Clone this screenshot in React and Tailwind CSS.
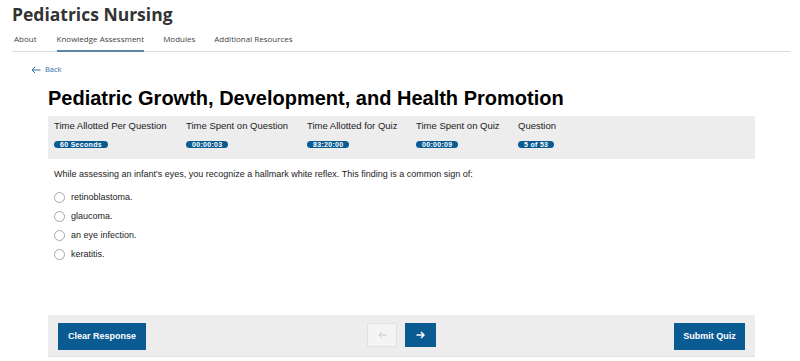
import React, { useState } from 'react';

const stats = [
    { label: 'Time Allotted Per Question', value: '60 Seconds', w: 'w-[132px]' },
    { label: 'Time Spent on Question', value: '00:00:03', w: 'w-[121px]' },
    { label: 'Time Allotted for Quiz', value: '83:20:00', w: 'w-[109px]' },
    { label: 'Time Spent on Quiz', value: '00:00:09', w: 'w-[102px]' },
    { label: 'Question', value: '5 of 53', w: 'w-[100px]' },
];

const options = ['retinoblastoma.', 'glaucoma.', 'an eye infection.', 'keratitis.'];

const tabs = ['About', 'Knowledge Assessment', 'Modules', 'Additional Resources'];

const App = () => {
    const [selected, setSelected] = useState(null);

    return (
        <div className="w-[800px] h-[361px] bg-white overflow-hidden text-[#222]">
            {/* Course header */}
            <div className="px-[12px] pt-[2px]">
                <h1 className="text-[17.5px] leading-[24px] font-bold text-[#333] font-['Open_Sans',sans-serif]">
                    Pediatrics Nursing
                </h1>
                <div className="mt-[7px] mr-[-2px] flex border-b border-[#dcdcdc] font-['Open_Sans',sans-serif] text-[8px] text-[#444]">
                    {tabs.map((tab, i) => (
                        <div
                            key={tab}
                            className={`pb-[5px] ${i === 0 ? 'ml-[2px] mr-[20px]' : 'mr-[19px]'} ${tab === 'Knowledge Assessment' ? 'border-b-2 border-[#5c86a8] mb-[-1px]' : ''}`}
                        >
                            {tab}
                        </div>
                    ))}
                </div>
            </div>

            {/* Back link */}
            <div className="mt-[12px] ml-[31px] flex items-center gap-[4px] text-[#2e6da4] font-['Open_Sans',sans-serif] text-[7.5px]">
                <svg width="10" height="8" viewBox="0 0 10 8" fill="none" stroke="#2e6da4" strokeWidth="1">
                    <path d="M9.5 4H1M4 1L1 4L4 7" />
                </svg>
                <span>Back</span>
            </div>

            <div className="ml-[48px] w-[707px] font-['Liberation_Sans',Arial,sans-serif]">
                <h2 className="mt-[11px] text-[20px] leading-[24px] font-bold text-black">
                    Pediatric Growth, Development, and Health Promotion
                </h2>

                {/* Timer panel */}
                <div className="mt-[6px] h-[43px] bg-[#ededed] pl-[6px] pt-[4px] flex">
                    {stats.map((s) => (
                        <div key={s.label} className={`${s.w} flex flex-col`}>
                            <span className="text-[9.5px] leading-[12px] text-[#222]">{s.label}</span>
                            <span className="mt-[9px] self-start rounded-full bg-[#0b5b93] px-[6px] h-[7px] flex items-center text-[7px] tracking-[0.3px] font-bold text-white leading-none">
                                {s.value}
                            </span>
                        </div>
                    ))}
                </div>

                {/* Question */}
                <div className="pl-[6px] pt-[9px] text-[9px] text-[#222]">
                    <p className="leading-[12px]">
                        While assessing an infant's eyes, you recognize a hallmark white reflex. This finding is a common sign of:
                    </p>
                    <div className="mt-[12px] flex flex-col gap-[8px]">
                        {options.map((opt, i) => (
                            <label key={opt} className="flex items-center gap-[6px] h-[11px] cursor-pointer" onClick={() => setSelected(i)}>
                                <span className="w-[11px] h-[11px] rounded-full border border-[#a8a8a8] bg-white flex items-center justify-center">
                                    {selected === i && <span className="w-[5px] h-[5px] rounded-full bg-[#0b5b93]" />}
                                </span>
                                <span className="leading-[11px]">{opt}</span>
                            </label>
                        ))}
                    </div>
                </div>

                {/* Footer actions */}
                <div className="mt-[55px] h-[42px] bg-[#ededed] border-b border-[#e0e0e0] px-[10px] pt-[8px] flex items-start">
                    <div className="flex-1 flex">
                        <button className="w-[88px] h-[27px] bg-[#0b5b93] text-white text-[9px] font-bold">
                            Clear Response
                        </button>
                    </div>
                    <div className="flex gap-[8px]">
                        <button className="w-[30px] h-[24px] bg-[#f4f4f4] border border-[#e2e2e2] flex items-center justify-center" disabled>
                            <svg width="9" height="8" viewBox="0 0 9 8" fill="none" stroke="#c8c8c8" strokeWidth="1">
                                <path d="M8.5 4H1M4 1L1 4L4 7" />
                            </svg>
                        </button>
                        <button className="w-[31px] h-[24px] bg-[#0b5b93] flex items-center justify-center">
                            <svg width="9" height="8" viewBox="0 0 9 8" fill="none" stroke="white" strokeWidth="1.5">
                                <path d="M0.5 4H8M5 1L8 4L5 7" />
                            </svg>
                        </button>
                    </div>
                    <div className="flex-1 flex justify-end">
                        <button className="w-[71px] h-[27px] bg-[#0b5b93] text-white text-[9px] font-bold">
                            Submit Quiz
                        </button>
                    </div>
                </div>
            </div>
        </div>
    );
};

export default App;
